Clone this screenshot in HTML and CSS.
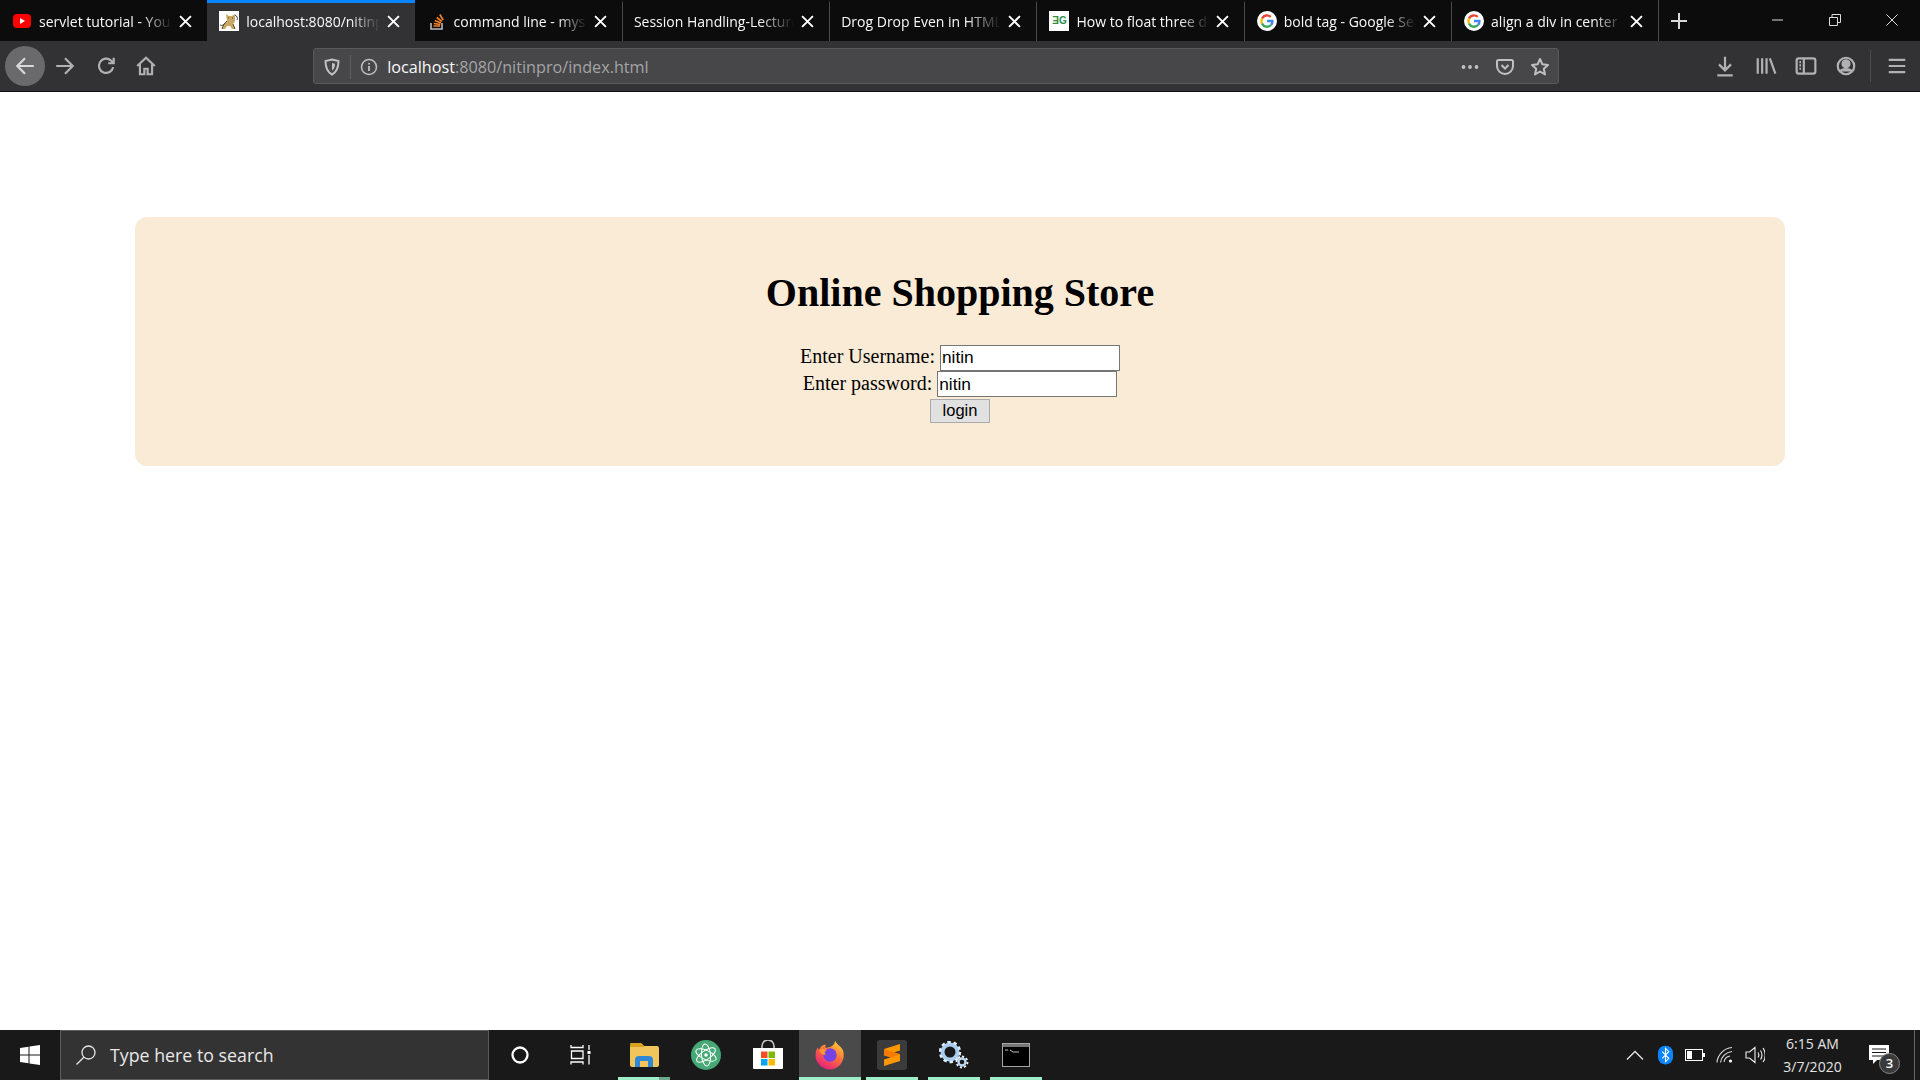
FILE: index.html

```html
<!DOCTYPE html>
<html lang="en">
<head>
  <meta charset="UTF-8" />
  <title>localhost:8080/nitinpro/index.html</title>
  <link rel="stylesheet" href="styles.css">
</head>
<body>
  <header class="browser">
    <div class="tabbar">
      <div class="tab">
        <svg class="favicon" viewBox="0 0 20 20"><rect x="1" y="3" width="18" height="14" rx="4" fill="#f00"/><path d="M8 7l5 3-5 3z" fill="#fff"/></svg>
        <span class="tab-title">servlet tutorial - YouTube</span>
        <svg class="tab-close" viewBox="0 0 12 12"><path d="M1 1l10 10M11 1L1 11"/></svg>
      </div>
      <div class="tab active">
        <svg class="favicon" viewBox="0 0 20 20"><rect width="20" height="20" fill="#fff"/><path d="M1 14c2 1 4 0 5-2M16 4c2 1 3 3 2 5" stroke="#444" stroke-width="1" fill="none"/><path d="M3 18c1-4 3-6 5-8L7 3l3 2h3l3-2v6c0 2-1 3-2 4l2 5h-3l-2-3-3 0-2 3z" fill="#c9a765"/><path d="M3 18c1-4 3-6 5-8M14 13l2 5M9 7h1M13 7h1" stroke="#5c4420" stroke-width="1" fill="none"/></svg>
        <span class="tab-title">localhost:8080/nitinpro/index.html</span>
        <svg class="tab-close" viewBox="0 0 12 12"><path d="M1 1l10 10M11 1L1 11"/></svg>
      </div>
      <div class="tab">
        <svg class="favicon" viewBox="0 0 20 20"><path d="M4 12v6h11v-6" fill="none" stroke="#bcbbbb" stroke-width="1.6"/><path d="M6.5 15h6.500M6.800 12.500l6.500 1M7.800 9.500l6 2.500M9.800 6.500l5 4M12.800 3.500l3.400 5.500" stroke="#f48024" stroke-width="1.700" fill="none"/></svg>
        <span class="tab-title">command line - mysql tutorial</span>
        <svg class="tab-close" viewBox="0 0 12 12"><path d="M1 1l10 10M11 1L1 11"/></svg>
      </div>
      <div class="tab sep no-icon">
        <span class="tab-title">Session Handling-Lecture</span>
        <svg class="tab-close" viewBox="0 0 12 12"><path d="M1 1l10 10M11 1L1 11"/></svg>
      </div>
      <div class="tab sep no-icon">
        <span class="tab-title">Drog Drop Even in HTML5</span>
        <svg class="tab-close" viewBox="0 0 12 12"><path d="M1 1l10 10M11 1L1 11"/></svg>
      </div>
      <div class="tab sep">
        <span class="gfg-icon">ƎG</span>
        <span class="tab-title">How to float three div</span>
        <svg class="tab-close" viewBox="0 0 12 12"><path d="M1 1l10 10M11 1L1 11"/></svg>
      </div>
      <div class="tab sep">
        <svg class="favicon" viewBox="0 0 20 20"><circle cx="10" cy="10" r="10" fill="#fff"/><path d="M5 7.500a5.500 5.500 0 0 1 8.700-1.600" fill="none" stroke="#ea4335" stroke-width="2.400"/><path d="M5 12.500a5.500 5.500 0 0 1 0-5" fill="none" stroke="#fbbc05" stroke-width="2.400"/><path d="M14 14a5.500 5.500 0 0 1-9-1.500" fill="none" stroke="#34a853" stroke-width="2.400"/><path d="M10 10h5.400a5.500 5.500 0 0 1-1.400 4" fill="none" stroke="#4285f4" stroke-width="2.400"/></svg>
        <span class="tab-title">bold tag - Google Search</span>
        <svg class="tab-close" viewBox="0 0 12 12"><path d="M1 1l10 10M11 1L1 11"/></svg>
      </div>
      <div class="tab sep">
        <svg class="favicon" viewBox="0 0 20 20"><circle cx="10" cy="10" r="10" fill="#fff"/><path d="M5 7.500a5.500 5.500 0 0 1 8.700-1.600" fill="none" stroke="#ea4335" stroke-width="2.400"/><path d="M5 12.500a5.500 5.500 0 0 1 0-5" fill="none" stroke="#fbbc05" stroke-width="2.400"/><path d="M14 14a5.500 5.500 0 0 1-9-1.500" fill="none" stroke="#34a853" stroke-width="2.400"/><path d="M10 10h5.400a5.500 5.500 0 0 1-1.400 4" fill="none" stroke="#4285f4" stroke-width="2.400"/></svg>
        <span class="tab-title">align a div in center</span>
        <svg class="tab-close" viewBox="0 0 12 12"><path d="M1 1l10 10M11 1L1 11"/></svg>
      </div>
      <div class="newtab sep">
        <svg viewBox="0 0 18 18" width="18" height="18"><path d="M9 1v16M1 9h16" stroke="#d8d8d8" stroke-width="2"/></svg>
      </div>
      <div class="window-controls">
        <div class="win-btn"><svg viewBox="0 0 12 12" width="12" height="12"><path d="M0 6h11"/></svg></div>
        <div class="win-btn"><svg viewBox="0 0 12 12" width="12" height="12"><path d="M.5 3.500h8v8h-8zM3 3.500v-3h8.500v8h-3"/></svg></div>
        <div class="win-btn"><svg viewBox="0 0 12 12" width="12" height="12"><path d="M.5.5l11 11M11.500.5l-11 11"/></svg></div>
      </div>
    </div>

    <div class="toolbar">
      <div class="tool back"><svg viewBox="0 0 20 20"><path d="M18 10H3M10 3l-7 7 7 7"/></svg></div>
      <div class="tool"><svg viewBox="0 0 20 20"><path d="M2 10h15M10 3l7 7-7 7"/></svg></div>
      <div class="tool"><svg viewBox="0 0 20 20"><path d="M16.500 11a6.500 6.500 0 1 1-2-6l2.500 2.500M17 2.500v5h-5"/></svg></div>
      <div class="tool"><svg viewBox="0 0 20 20"><path d="M2 10l8-7.500 8 7.500M4.500 8.500V17.500h4v-5h3v5h4V8.500"/></svg></div>

      <div class="urlbar">
        <svg class="url-icon" viewBox="0 0 20 20"><path d="M10 2.500l6.500 1.500c0 6-1 10.500-6.500 13.500C4.500 14.500 3.500 10 3.500 4z" fill="none" stroke="#c0c0c0" stroke-width="2"/><path d="M10 6l3 .7c0 3-.5 5-3 6.800z" fill="#c0c0c0"/></svg>
        <span class="url-sep"></span>
        <svg class="url-icon" viewBox="0 0 20 20"><circle cx="10" cy="10" r="7.500" fill="none" stroke="#c0c0c0" stroke-width="1.500"/><path d="M10 9v5M10 6v1.600" stroke="#c0c0c0" stroke-width="1.800"/></svg>
        <span class="url-text">localhost<span class="url-dim">:8080/nitinpro/index.html</span></span>
        <svg class="url-action" viewBox="0 0 20 20"><circle cx="3.500" cy="10" r="1.900"/><circle cx="10" cy="10" r="1.900"/><circle cx="16.500" cy="10" r="1.900"/></svg>
        <svg class="url-action" viewBox="0 0 20 20"><path d="M3.500 3h13a1.500 1.500 0 0 1 1.500 1.500V9a8 8 0 0 1-16 0V4.500A1.500 1.500 0 0 1 3.500 3z" fill="none" stroke="#c0c0c0" stroke-width="2"/><path d="M6.500 8l3.500 3.500L13.500 8" fill="none" stroke="#c0c0c0" stroke-width="2"/></svg>
        <svg class="url-action" viewBox="0 0 20 20"><path d="M10 2l2.400 5.300 5.600.6-4.200 3.800 1.200 5.700L10 14.500 5 17.400l1.200-5.700L2 7.900l5.600-.6z" fill="none" stroke="#c0c0c0" stroke-width="2" stroke-linejoin="round"/></svg>
      </div>

      <div class="tool-group">
        <div class="tool"><svg viewBox="0 0 20 20"><path d="M10 1.500v12M4.500 8.500l5.500 5.500 5.500-5.500M3 18.500h14"/></svg></div>
        <div class="tool"><svg viewBox="0 0 20 20"><path d="M2.500 3v14M6.500 3v14M10.500 3v14M13.500 3l5 14"/></svg></div>
        <div class="tool"><svg viewBox="0 0 20 20"><rect x="1.500" y="3" width="17" height="14" rx="2"/><path d="M8 3v14M4 6.500h1.500M4 9.500h1.500M4 12.500h1.500"/></svg></div>
        <div class="tool"><svg viewBox="0 0 20 20"><circle cx="10" cy="10" r="7.500"/><circle cx="10" cy="8" r="3.200" fill="#b1b1b3"/><path d="M4.500 15c2-3 9-3 11 0" fill="#b1b1b3"/></svg></div>
        <span class="tool-sep"></span>
        <div class="tool menu"><svg viewBox="0 0 20 20"><path d="M2.500 4.500h15M2.500 10h15M2.500 15.500h15"/></svg></div>
      </div>
    </div>
  </header>

  <main class="page">
    <div class="login-card">
      <h1>Online Shopping Store</h1>
      <form>
        Enter Username: <input type="text" value="nitin"><br>
        Enter password: <input type="text" value="nitin"><br>
        <button type="button">login</button>
      </form>
    </div>
  </main>

  <footer class="taskbar">
    <div class="start">
      <svg viewBox="0 0 20 20" width="20" height="20"><path d="M0 3l8.500-1.200V9.500H0zM9.500 1.600L20 0v9.500H9.500zM0 10.500h8.500v7.700L0 17zM9.500 10.500H20V20L9.500 18.400z" fill="#fff"/></svg>
    </div>
    <div class="searchbox">
      <svg viewBox="0 0 22 22" width="22" height="22"><circle cx="13.500" cy="8.500" r="6.500" fill="none" stroke="#e6e6e6" stroke-width="1.300"/><path d="M8.800 13.200L1.500 20.500" stroke="#e6e6e6" stroke-width="1.300"/></svg>
      <span>Type here to search</span>
    </div>
    <div class="task-item">
      <svg viewBox="0 0 24 24" width="24" height="24"><circle cx="12" cy="12" r="7.500" fill="none" stroke="#fff" stroke-width="2.300"/></svg>
    </div>
    <div class="task-item task-view">
      <svg viewBox="0 0 22 20" width="22" height="20" fill="none" stroke="#fff" stroke-width="1.300"><path d="M1 0v2.500h12V0M1.500 6h11.500v7.500H1.500zM1 19.500V17h12v2.500M19 0v5M19 10v9.500"/><rect x="17.500" y="6" width="3" height="3" fill="#fff" stroke="none"/></svg>
    </div>
    <div class="task-item open split">
      <svg viewBox="0 0 30 26" width="30" height="26"><path d="M1 3a2 2 0 0 1 2-2h9l3 3h13a2 2 0 0 1 2 2v17a2 2 0 0 1-2 2H3a2 2 0 0 1-2-2z" fill="#f2c55c"/><path d="M1 3a2 2 0 0 1 2-2h9l3 3v1H1z" fill="#d9a21b"/><path d="M6 25v-7a4 4 0 0 1 4-4h10a4 4 0 0 1 4 4v7h-5v-6h-8v6z" fill="#2f88d5"/></svg>
    </div>
    <div class="task-item">
      <svg viewBox="0 0 30 30" width="30" height="30"><circle cx="15" cy="15" r="15" fill="#45a875"/><g fill="none" stroke="#fff" stroke-width="1"><ellipse cx="15" cy="15" rx="11" ry="4.500" transform="rotate(25 15 15)"/><ellipse cx="15" cy="15" rx="11" ry="4.500" transform="rotate(-35 15 15)"/><ellipse cx="15" cy="15" rx="11" ry="4.500" transform="rotate(85 15 15)"/></g><circle cx="15" cy="15" r="1.800" fill="#fff"/></svg>
    </div>
    <div class="task-item">
      <svg viewBox="0 0 30 30" width="30" height="30"><path d="M9 9V6a6 6 0 0 1 12 0v3" fill="none" stroke="#c8c8c8" stroke-width="1.600"/><path d="M0 8h30v20a1 1 0 0 1-1 1H1a1 1 0 0 1-1-1z" fill="#fff"/><rect x="8" y="11.500" width="6.500" height="6.500" fill="#f25022"/><rect x="15.500" y="11.500" width="6.500" height="6.500" fill="#7fba00"/><rect x="8" y="19" width="6.500" height="6.500" fill="#00a4ef"/><rect x="15.500" y="19" width="6.500" height="6.500" fill="#ffb900"/></svg>
    </div>
    <div class="task-item open active">
      <svg viewBox="0 0 30 30" width="30" height="30">
        <defs>
          <linearGradient id="foxGrad" x1="0.800" y1="0" x2="0.200" y2="1"><stop offset="0" stop-color="#ffd23a"/><stop offset="0.450" stop-color="#ff7139"/><stop offset="1" stop-color="#e31587"/></linearGradient>
        </defs>
        <path d="M20 .5c1 4 6 5 8 10 3 8-3 19-13 19C7 29.500 .5 23 .5 15c0-3 1-6 2-7.500l1.500 2.500C5 6 9 4 11 5c-1 1-1 2 0 3 4-1 9-2 9-7.500z" fill="url(#foxGrad)"/>
        <circle cx="15" cy="15" r="6.700" fill="#7542e5"/>
        <path d="M4 10c3-2 6-1 8 1-3 0-3 2-1 3-2 2-5 0-7-4z" fill="#ff9a2e"/>
      </svg>
    </div>
    <div class="task-item open">
      <svg viewBox="0 0 30 30" width="30" height="30"><rect width="30" height="30" rx="3" fill="#3b3b3b"/><path d="M23 4v6.500L7 15.500V9z" fill="#ff9800"/><path d="M7 15.500l16 5V14L7 9z" fill="#f57c00"/><path d="M23 14.500v6.500L7 26v-6.500z" fill="#ff9800"/></svg>
    </div>
    <div class="task-item open">
      <svg viewBox="0 0 30 28" width="30" height="28"><g fill="none"><circle cx="11" cy="11" r="7.500" stroke="#a9cdf0" stroke-width="4"/><circle cx="11" cy="11" r="10" stroke="#dfeefb" stroke-width="2.400" stroke-dasharray="3.500 2.800"/><circle cx="23" cy="21" r="3.500" stroke="#bcd7ee" stroke-width="2.400"/><circle cx="23" cy="21" r="5.500" stroke="#e8f2fb" stroke-width="1.800" stroke-dasharray="2.200 2"/></g></svg>
    </div>
    <div class="task-item open">
      <svg viewBox="0 0 28 24" width="28" height="24"><rect x=".5" y=".5" width="27" height="23" fill="#000" stroke="#a5a5a5"/><rect x="1" y="1" width="26" height="3" fill="#777"/><path d="M3 7h3M8 7l3 2h6" stroke="#bbb" fill="none"/></svg>
    </div>

    <div class="tray">
      <div class="tray-item"><svg viewBox="0 0 18 10" width="18" height="10"><path d="M1 9.500L9 1.500l8 8" fill="none" stroke="#e6e6e6" stroke-width="1.300"/></svg></div>
      <div class="tray-item"><svg viewBox="0 0 16 20" width="15" height="20"><rect width="16" height="20" rx="7.500" fill="#0a84ff"/><path d="M4.500 6.500l7 7L8 17V3l3.500 3.500-7 7" fill="none" stroke="#fff" stroke-width="1.200"/></svg></div>
      <div class="tray-item"><svg viewBox="0 0 20 12" width="20" height="12"><rect x=".5" y=".5" width="17" height="11" fill="none" stroke="#fff"/><rect x="2" y="2" width="5" height="8" fill="#fff"/><rect x="18" y="4" width="2" height="4" fill="#fff"/></svg></div>
      <div class="tray-item"><svg viewBox="0 0 18 18" width="18" height="18" fill="none" stroke="#ddd" stroke-width="1.100"><path d="M1 16.500C1.500 9 8 2 16 1.500M4.500 16.500C5 11 10 6 16 5.500M8 16C8.500 13 11 10.500 14 10"/><circle cx="14.500" cy="15" r="1.600" fill="#fff" stroke="none"/></svg></div>
      <div class="tray-item"><svg viewBox="0 0 20 18" width="20" height="18" fill="none" stroke="#eee" stroke-width="1.100"><path d="M1 6h3.500L10 1.500v15L4.500 12H1zM13 6.500c1 1.500 1 3.500 0 5M15.500 4.500c2 2.500 2 6.500 0 9M18 2c3 4 3 10 0 14"/></svg></div>
      <div class="clock"><span>6:15 AM</span><span>3/7/2020</span></div>
      <div class="notify">
        <svg viewBox="0 0 22 20" width="22" height="20"><path d="M0 0h20v15H8l-4 4v-4H0z" fill="#fff"/><path d="M3 4h14M3 7.500h14M3 11h14" stroke="#191919"/></svg>
        <span class="notify-count">3</span>
      </div>
      <div class="show-desktop"></div>
    </div>
  </footer>
</body>
</html>
```

FILE: styles.css

```css
* { box-sizing: border-box; }
html, body { height: 100%; }
body { margin: 0; display: flex; flex-direction: column; height: 1080px; overflow: hidden; background: #fff; font-family: "Liberation Serif", serif; }

/* browser chrome */
.browser { font-family: "Open Sans", sans-serif; color: #f9f9fa; }
.tabbar { display: flex; height: 41px; background: #0c0c0d; }
.tab { width: 207.300px; display: flex; align-items: center; padding: 0 13px 2px 12px; border-top: 3px solid transparent; }
.tab.active { background: #323234; border-top-color: #0a84ff; }
.tab.sep { border-left: 1px solid #4a4a4b; }
.tab.no-icon { padding-left: 11px; }
.favicon { width: 20px; height: 20px; flex: none; margin-right: 7px; }
.gfg-icon { width: 20px; height: 20px; flex: none; margin-right: 7px; background: #fff; color: #2f8d46; font: bold 10px/20px "Liberation Sans", sans-serif; text-align: center; }
.tab-title { flex: 1; min-width: 0; white-space: nowrap; overflow: hidden; font-size: 14px; -webkit-mask-image: linear-gradient(to right, #000 78%, transparent 100%); mask-image: linear-gradient(to right, #000 78%, transparent 100%); }
.tab-close { width: 13px; height: 13px; flex: none; margin-left: 7px; margin-right: 2px; fill: none; stroke: #fff; stroke-width: 1.800; }
.newtab { width: 41px; display: flex; align-items: center; justify-content: center; border-left: 1px solid #4a4a4b; }
.window-controls { margin-left: auto; display: flex; }
.win-btn { width: 57px; display: flex; align-items: center; justify-content: center; padding-bottom: 2px; }
.win-btn svg { fill: none; stroke: #ddd; stroke-width: 1; }

.toolbar { display: flex; align-items: center; height: 51px; padding: 0 0 0 5px; background: #323234; border-bottom: 1px solid #0c0c0d; }
.tool { width: 40px; height: 40px; flex: none; display: flex; align-items: center; justify-content: center; }
.tool svg { width: 22px; height: 22px; fill: none; stroke: #b1b1b3; stroke-width: 2; }
.tool.back { background: #6a6a6c; border-radius: 50%; }
.tool.back svg { stroke: #d8d8d8; }
.tool + .tool { margin-left: .4px; }
.urlbar { width: 1246px; height: 36px; margin-left: 147px; display: flex; align-items: center; padding: 1px 8px 0 8px; background: #474749; border: 1px solid #59595b; border-radius: 3px; }
.url-icon { width: 20px; height: 20px; flex: none; }
.url-sep { width: 1px; height: 24px; margin: 0 8px; background: #5f5f61; }
.url-text { flex: 1; margin-left: 8px; font-size: 16.200px; white-space: nowrap; color: #f9f9fa; }
.url-dim { color: #a4a4a6; }
.url-action { width: 20px; height: 20px; flex: none; margin-left: 15px; fill: #c0c0c0; }
.tool-group { display: flex; align-items: center; margin-left: 146px; }
.tool-sep { width: 1px; height: 32px; margin: 0 4px; background: #4c4c4e; }
.tool.menu { width: 44px; }

/* page content */
.page { flex: 1; padding: 125px 135px 0; }
.login-card { height: 249px; padding-top: 52px; background: #faebd7; border-radius: 12px; text-align: center; font-size: 20px; }
h1 { margin: 0 0 26px; font-size: 40px; line-height: 48px; }
form { line-height: 26px; }
input { width: 180px; height: 26px; margin: -1px 0; padding: 1px; border: 1px solid #767676; background: #fff; font: 17.300px "Liberation Sans", sans-serif; color: #000; }
button { width: 60px; height: 24px; margin: -1px 0; padding: 0; border: 1px solid #ababab; background: #e1e1e1; font: 16.500px "Liberation Sans", sans-serif; color: #000; }

/* windows taskbar */
.taskbar { display: flex; height: 50px; flex: none; background: #191919; font-family: "Open Sans", sans-serif; color: #eee; }
.start { width: 60px; display: flex; align-items: center; justify-content: center; }
.searchbox { width: 429px; display: flex; align-items: center; padding-left: 14px; gap: 13px; background: #333; border: 1px solid #5c5c5c; font-size: 17.800px; color: #e8e8e8; }
.task-item { width: 62px; display: flex; align-items: center; justify-content: center; position: relative; }
.task-item.task-view { padding-right: 3px; }
.task-item.active { background: #4a4a4a; }
.task-item.open::after { content: ""; position: absolute; left: 5px; right: 5px; bottom: 0; height: 3px; background: #9eeec8; }
.task-item.active::after { left: 0; right: 0; }
.task-item.split::before { content: ""; position: absolute; right: 5px; bottom: 0; width: 11px; height: 3px; background: #6ea88e; z-index: 1; }
.tray { margin-left: auto; display: flex; align-items: center; height: 100%; }
.tray-item { width: 30px; display: flex; align-items: center; justify-content: center; }
.clock { width: 85px; display: flex; flex-direction: column; align-items: center; gap: 3px; font-size: 14px; line-height: 20px; color: #e4e4e4; }
.notify { width: 50px; height: 100%; display: flex; align-items: center; justify-content: center; position: relative; }
.notify-count { position: absolute; left: 24px; top: 23px; width: 21px; height: 21px; border-radius: 50%; background: #3a3a3a; border: 1px solid #888; font-size: 13px; font-weight: 600; line-height: 19px; text-align: center; color: #fff; }
.show-desktop { width: 15px; height: 100%; }
.show-desktop::before { content: ""; display: block; width: 1px; height: 100%; margin-left: 9px; background: #666; }
```
